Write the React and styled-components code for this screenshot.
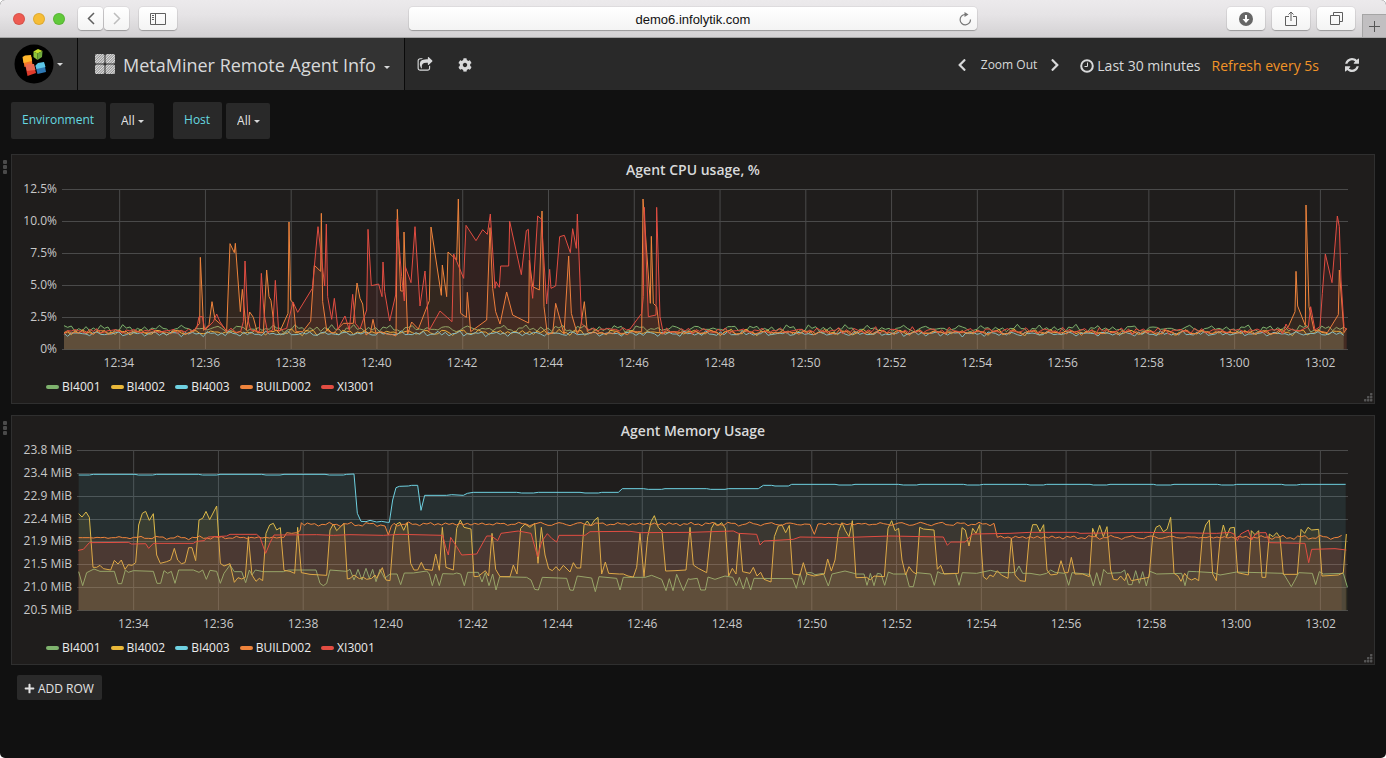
import React from "react";
import styled, { createGlobalStyle } from "styled-components";
import { FaCog, FaChevronLeft, FaChevronRight, FaPlus } from "react-icons/fa";

const GlobalStyle = createGlobalStyle`
  * { box-sizing: border-box; }
  body { margin: 0; background: #fff; font-family: "Open Sans", "Noto Sans", sans-serif; }
  button, input, select { font-family: inherit; margin: 0; }
`;

/* ---------- window and browser toolbar ---------- */

const Window = styled.div`
  min-height: 100vh;
  display: flex;
  flex-direction: column;
  overflow: hidden;
  border-radius: 5px;
  background: #111;
  color: #d8d9da;
`;

const Toolbar = styled.header`
  display: grid;
  grid-template-columns: 1fr 41% 1fr;
  align-items: center;
  height: 38px;
  background: linear-gradient(#eceaec, #e6e4e6 40%, #d3d1d3);
  border-bottom: 1px solid #a5a5a5;
`;

const ToolbarSide = styled.div`
  display: flex;
  align-items: center;
  height: 100%;
  padding-left: 13px;
  justify-content: ${(p) => (p.$end ? "flex-end" : "flex-start")};
  gap: ${(p) => p.$gap}px;
`;

const Lights = styled.div`
  display: flex;
  gap: 8px;
  margin-right: 12px;
`;

const Light = styled.span`
  width: 12px;
  height: 12px;
  border-radius: 50%;
  background: ${(p) => p.$color};
  box-shadow: inset 0 0 0 1px rgba(0, 0, 0, 0.1);
`;

const ToolButton = styled.button`
  display: flex;
  align-items: center;
  justify-content: center;
  width: ${(p) => (p.$narrow ? 25 : 38)}px;
  height: 23px;
  margin-left: ${(p) => (p.$apart ? 9 : 0)}px;
  padding: 0;
  border: 0;
  border-radius: 4px;
  background: linear-gradient(#fff, #f4f4f4);
  box-shadow: 0 0 0 1px rgba(0, 0, 0, 0.05), 0 1px 1px rgba(0, 0, 0, 0.25);
  color: ${(p) => (p.$faded ? "#bdbdbd" : "#5f5f5f")};
`;

const Address = styled.label`
  display: flex;
  align-items: center;
  height: 23px;
  border-radius: 4px;
  background: linear-gradient(#fff, #f4f4f4);
  box-shadow: 0 0 0 1px rgba(0, 0, 0, 0.05), 0 1px 1px rgba(0, 0, 0, 0.25);
`;

const AddressInput = styled.input`
  flex: 1;
  min-width: 0;
  padding: 2px 0 0 24px;
  border: 0;
  background: none;
  text-align: center;
  font: 13px "Liberation Sans", Arial, sans-serif;
  color: #111;
`;

const ReloadButton = styled.button`
  width: 24px;
  padding: 0;
  border: 0;
  background: none;
  line-height: 0;
`;

const NewTab = styled.button`
  align-self: flex-end;
  display: flex;
  align-items: center;
  justify-content: center;
  width: 24px;
  height: 23px;
  padding: 0;
  border: 1px solid #a5a5a5;
  border-width: 1px 0 0 1px;
  background: #c1bfc1;
`;

/* ---------- dashboard navigation ---------- */

const Nav = styled.nav`
  display: flex;
  align-items: center;
  height: 52px;
  background: #292929;
`;

const NavBlock = styled.button`
  display: flex;
  align-items: center;
  height: 100%;
  gap: ${(p) => p.$gap}px;
  padding: 0 ${(p) => p.$right}px 0 ${(p) => p.$left}px;
  border: 0;
  border-right: 1px solid #0a0a0a;
  background: #333;
  color: #d8d9da;
  white-space: nowrap;
`;

const DashboardName = styled.span`
  padding-top: 2px;
  font-size: 18px;
  line-height: 24px;
`;

const Caret = styled.span`
  border: solid transparent;
  border-width: 3px 3px 0;
  border-top-color: #d8d9da;
  margin-top: ${(p) => (p.$low ? 6 : 0)}px;
`;

const NavAction = styled.button`
  display: flex;
  align-items: center;
  justify-content: center;
  width: 40px;
  height: 40px;
  padding: 2px 0 0;
  border: 0;
  background: none;
  color: #d8d9da;
`;

const NavTime = styled.div`
  display: flex;
  align-items: center;
  margin-left: auto;
  padding-right: 14px;
`;

const TimeButton = styled.button`
  display: flex;
  align-items: center;
  gap: 3px;
  padding: ${(p) => (p.$small ? 2 : 4)}px 0 0;
  margin-right: ${(p) => p.$after || 0}px;
  border: 0;
  background: none;
  white-space: nowrap;
  line-height: 20px;
  font-size: ${(p) => (p.$small ? 12 : 14)}px;
  color: ${(p) => (p.$accent ? "#f29427" : "#d8d9da")};
`;

/* ---------- filters ---------- */

const Filters = styled.div`
  display: flex;
  gap: 19px;
  padding: 12px 11px 15px;
`;

const Filter = styled.div`
  display: flex;
  align-items: flex-end;
  gap: 4px;
  font-size: 12px;
`;

const FilterLabel = styled.label`
  padding: 0 12px 0 11px;
  line-height: 36px;
  height: 37px;
  border-radius: 2px;
  background: #292929;
  color: #66d9e0;
`;

const SelectBox = styled.div`
  display: flex;
  align-items: center;
  position: relative;
`;

const Select = styled.select`
  appearance: none;
  width: 44px;
  height: 36px;
  padding: 0 0 2px 11px;
  border: 0;
  border-radius: 2px;
  background: #292929;
  color: #e3e3e3;
  font-size: 12px;
`;

const SelectCaret = styled(Caret)`
  position: absolute;
  right: 10px;
  pointer-events: none;
`;

/* ---------- panels ---------- */

const Rows = styled.main`
  display: flex;
  flex-direction: column;
  gap: 11px;
  padding-right: 11px;
`;

const Row = styled.div`
  display: grid;
  grid-template-columns: 11px 1fr;
`;

const RowHandle = styled.button`
  display: flex;
  flex-direction: column;
  align-items: center;
  gap: 1px;
  padding: 6px 1px 0 0;
  border: 0;
  background: none;
  span {
    width: 4px;
    height: 4px;
    border-radius: 1px;
    background: #4a4a4a;
  }
`;

const Panel = styled.section`
  position: relative;
  min-width: 0;
  padding-bottom: 6px;
  border: 1px solid #2f2f2f;
  background: #1f1d1c;
`;

const PanelTitle = styled.h2`
  margin: 0;
  padding-top: 4px;
  text-align: center;
  font-size: 14px;
  font-weight: 600;
  line-height: 22px;
  color: #d8d9da;
`;

const PlotRow = styled.div`
  display: grid;
  grid-template-columns: ${(p) => p.$axis}px 1fr;
  gap: 5px;
  height: 176px;
  padding-right: 26px;
`;

const YAxis = styled.div`
  display: flex;
  flex-direction: column;
  justify-content: space-between;
  text-align: right;
  font-size: 12px;
  line-height: 16px;
  color: #c8c8c8;
  white-space: nowrap;
`;

const XAxis = styled.div`
  display: flex;
  margin: 0 11px 0 ${(p) => p.$left}px;
  font-size: 12px;
  line-height: 12px;
  color: #c8c8c8;
  span {
    flex: 1;
    text-align: center;
  }
`;

const PlotSvg = styled.svg`
  display: block;
  width: 100%;
  height: 176px;
  path {
    vector-effect: non-scaling-stroke;
  }
`;

const Legend = styled.ul`
  display: flex;
  gap: 10px;
  margin: 8px 0 0;
  padding: 0 0 0 34px;
  list-style: none;
  font-size: 12px;
  line-height: 20px;
`;

const LegendItem = styled.li`
  display: flex;
  align-items: center;
  gap: 3px;
  color: #ececec;
  &::before {
    content: "";
    width: 13px;
    height: 4px;
    border-radius: 2px;
    background: ${(p) => p.$color};
  }
`;

const ResizeGrip = styled.svg`
  position: absolute;
  right: 1px;
  bottom: 1px;
`;

const AddRow = styled.button`
  align-self: flex-start;
  display: flex;
  align-items: center;
  gap: 3px;
  height: 25px;
  margin: 10px 0 0 17px;
  padding: 1px 8px 0 7px;
  border: 0;
  border-radius: 2px;
  background: #2a2a2a;
  color: #e3e3e3;
  font-size: 12px;
`;

/* ---------- series data: x and y are in thirds of a pixel ---------- */

const COLORS = {
  BI4001: "#7eb26d",
  BI4002: "#eab839",
  BI4003: "#6ed0e0",
  BUILD002: "#ef843c",
  XI3001: "#e24d42",
};

const at = (dx, dy, text) =>
  text.trim().split(/\s+/).map((pair) => {
    const [x, y] = pair.split(",").map(Number);
    return [x + dx, y + dy];
  });

const idle = (from, to, level, swing, seed) => {
  const points = [];
  for (let x = from; x < to; x += 11) {
    const n = Math.sin(x * 0.11 + seed) * 0.5 + Math.sin(x * 0.043 * seed + 2) * 0.4 + Math.sin(x * 0.29 + seed * 3) * 0.5;
    points.push([x, Math.round(level + n * swing)]);
  }
  return points;
};

const cpu = {
  BI4001: idle(192, 4042, 986, 10, 1.7),
  BI4002: idle(192, 4042, 997, 8, 2.9),
  BI4003: idle(192, 4042, 1001, 7, 4.3),
  BUILD002: [
    ...idle(192, 578, 996, 7, 3.1),
    ...at(0, 450, `580,545 590,530 599,520 601,322 607,450 611,541 627,524 636,455 645,508 668,528 680,543 690,281 703,308
      706,280 721,485 727,418 739,541 749,486 760,502 772,548 790,548 800,360 807,440 813,452 824,540 840,543 864,490 867,216
      872,450 880,460 888,545 908,545 932,514 943,346 962,364 964,190 968,455 980,540 1000,550 1030,520 1060,520`),
    ...at(1020, 540, `51,309 60,355 68,372 78,465 92,455 99,418 108,460 124,455 140,462 155,463 168,468 172,88 182,333
      190,333 192,156 203,462 215,426 235,447 268,362 273,141 304,346 307,255 320,350 324,216 350,240 355,57 362,400 379,412
      382,337 392,455 440,420 450,143 458,325 467,395 480,432 500,336 518,405 566,429 568,241 578,320 598,330 606,93 612,380
      622,462 638,460 647,370 672,462 686,228 694,400 712,462 722,440 733,365 742,455`),
    ...idle(1772, 1900, 999, 5, 3.1),
    ...at(1020, 540, `892,455 905,455 909,57 931,370 934,169 940,370 950,380 960,460`),
    ...idle(1990, 3860, 997, 7, 3.1),
    ...at(3120, 540, `745,440 765,395 768,274 773,378 796,437 798,75 807,380 822,450 862,458 895,404 898,270 912,458 920,445`),
  ],
  XI3001: [
    ...idle(192, 572, 993, 8, 5.2),
    ...at(0, 450, `575,543 590,535 597,500 607,500 615,540 640,515 650,492 660,515 680,545 693,535 708,547 722,545 730,515
      735,333 744,510 752,540 778,545 784,370 792,490 803,548 818,540 826,391 836,542 860,535 879,456 893,487 937,415 954,230
      974,408 979,222 983,440 995,508 1003,445 1014,538`),
    ...at(1020, 540, `0,435 15,408 28,450 38,343 46,430 60,447 80,390 84,148 94,317 116,312 126,350 129,246 134,335 149,423
      167,345 171,118 185,290 193,363 196,260 213,308 225,140 240,378 255,273 267,452 300,393 336,425 341,222 371,295 378,136
      408,182 428,149 442,163 451,102 465,325 468,305 478,322 482,258 506,258 509,124 544,284 559,152 565,148 573,310 578,355
      593,108 604,117 620,372 629,268 633,325 647,318 659,170 673,166 691,218 698,146 709,205 712,102 725,430 740,445`),
    ...idle(1770, 1885, 988, 5, 5.2),
    ...at(1020, 540, `870,447 905,400 910,350 913,82 925,410 948,405 950,82 960,410 970,460`),
    ...idle(2000, 3850, 992, 9, 5.2),
    ...at(3120, 540, `738,432 745,445 760,450 780,452 805,440 812,380 825,450 840,440 847,340 856,222 876,308 892,108
      898,140 903,300 912,440 920,450`),
  ],
};

const memory = {
  BI4001: [
    ...at(0, 1230, `236,485 248,527 260,488 282,477 300,484 343,484 354,521 365,521 376,480 385,487 400,482 460,484 471,520
      482,520 492,482 503,490 514,484 525,520 536,480 580,480 597,487 608,480 619,508 630,481 650,484 661,520 672,490 690,465
      703,485 725,485 737,518 748,480 756,495 766,480 790,485 850,485 865,480 948,480 960,520 970,527 980,520 990,480
      1040,484`),
    ...at(1050, 1320, `0,388 12,420 24,388 36,420 48,385 58,415 68,388 78,425 90,388 104,415 120,402 141,402 152,434
      163,399 190,399 230,393 238,402 247,437 257,402 268,437 278,401 310,402 320,399 332,402 343,437 353,397 385,397 396,426
      406,398 417,437 428,402 438,450 449,410 530,412 543,420 554,448 565,450 577,412 650,415 660,450 670,451 682,408 725,414
      736,455 747,410 800,415 810,450 820,412 885,412 905,406 935,418 948,452 958,416 969,452 980,403 1000,452 1015,416`),
    ...at(2070, 1320, `0,418 22,415 32,450 46,450 54,411 75,418 105,408 128,412 139,437 148,412 160,447 170,412 182,450
      192,415 308,416 319,445 330,400 341,435 352,398 365,398 375,404 400,400 415,438 426,402 465,393 500,402 522,402 531,436
      541,400 552,437 562,400 573,402 584,436 595,396 610,402 648,402 658,440 670,440 680,398 722,402 733,436 743,395 755,401
      797,400 807,436 817,398 860,400 902,391 930,398 965,398 977,396 987,378 998,400`),
    ...at(3090, 1320, `0,400 30,405 50,400 62,390 75,397 105,400 116,436 126,398 180,403 190,438 200,398 211,436 221,388
      232,400 272,398 284,390 295,434 306,434 317,392 328,430 338,395 349,438 360,394 380,402 455,400 465,437 475,394 500,395
      550,398 570,405 620,396 760,400 784,440 795,420 806,398 847,400 857,434 868,395 880,402 940,400 952,441`),
  ],
  BI4002: [
    ...at(0, 1230, `236,311 246,321 258,306 268,322 279,472 290,472 300,466 310,476 332,480 343,451 354,462 364,450 375,478
      385,464 396,466 407,458 416,345 427,310 437,304 448,331 460,311 470,435 481,460 500,455 512,450 523,415 533,450 544,461
      555,458 566,413 576,413 587,452 597,330 608,325 618,304 629,329 650,288 661,460 672,468 690,461 703,517 714,503 725,507
      736,502 745,380 756,495 768,514 778,505 788,512 798,370 809,345 820,340 830,360 841,353 852,481 870,484 884,490 893,352
      904,488 915,490 930,493 980,496 990,360 1000,342 1010,362 1032,340 1042,507`),
    ...at(1050, 1320, `0,415 12,405 28,416 40,412 50,418 65,415 75,405 80,415 97,383 108,420 120,422 130,290 140,252
      150,247 161,271 172,247 182,370 192,390 203,390 214,367 224,388 247,391 257,342 268,391 277,262 288,382 310,390 320,265
      331,240 342,262 363,267 372,410 385,409 406,392 416,408 426,280 437,388 450,410 480,410 490,375 501,402 512,265 525,252
      540,262 554,250 564,370 574,262 585,345 596,386 607,392 618,380 628,392 640,376 660,396 670,368 680,384 692,384 702,255
      712,243 722,258 734,240 744,232 755,402 766,366 776,400 808,402 820,402 834,408 850,411 860,382 870,280 882,410 893,290
      903,245 913,227 925,262 936,273 947,393 975,392 1008,390`),
    ...at(2070, 1320, `0,262 10,375 25,385 50,398 64,265 74,248 84,256 95,248 106,265 116,408 127,385 138,402 148,280
      158,395 180,400 190,382 201,408 212,397 222,418 243,426 253,290 265,258 276,255 287,278 298,256 308,402 330,405 340,368
      350,402 372,408 403,402 413,357 424,393 435,360 445,275 456,248 466,272 477,290 487,242 498,413 530,412 541,420 552,408
      583,410 594,265 605,242 615,272 626,265 636,360 647,405 657,380 668,395 679,402 689,262 700,267 732,270 742,388 752,376
      762,402 805,400 816,263 826,270 837,318 848,265 858,280 869,254 880,410 890,418 900,405 910,410 922,392 934,405 954,415
      964,295 975,405 990,422 1006,424 1017,300`),
    ...at(3090, 1320, `8,254 20,254 30,275 41,254 51,390 62,405 82,402 93,362 104,398 114,398 124,352 135,402 158,402
      178,410 188,265 198,290 209,256 220,290 231,260 242,390 250,418 262,420 272,408 284,422 293,400 304,422 325,418 357,412
      368,290 378,262 389,256 400,275 411,268 422,232 432,400 444,408 453,424 464,400 475,415 485,420 495,415 506,422 517,290
      527,255 538,240 548,402 559,422 570,300 580,255 590,290 600,264 613,262 623,398 655,405 664,272 675,284 686,272 696,412
      707,412 718,282 729,290 740,278 750,292 760,403 802,403 813,268 824,280 834,262 845,270 866,268 876,408 925,405 940,398
      949,282`),
  ],
  BI4003: [
    ...at(0, 1230, `236,195 268,195 280,193 405,193 415,195 458,195 470,193 595,193 608,195 650,195 660,193 785,193 798,195
      840,195 852,193 975,193 988,195 1030,195 1040,193`),
    ...at(1050, 1320, `12,102 22,220 33,244 48,245 60,241 80,246 95,244 112,247 118,247 128,180 138,143 148,139 175,138
      185,136 203,136 213,211 224,166 290,166 305,164 340,166 352,160 370,157 500,157 515,159 550,159 565,157 690,157 705,159
      745,159 755,157 805,157 817,146 880,146 895,148 935,148 945,146`),
    ...at(2070, 1320, `50,146 62,148 105,148 115,146 205,146 220,136 245,136 255,138 295,138 305,133 435,133 447,135
      485,135 495,133 625,133 640,135 680,135 690,133 820,133 832,135 868,135 880,133`),
    ...at(3090, 1320, `-10,133 0,135 40,135 50,133 180,133 190,135 230,135 240,133 370,133 380,135 422,135 432,133 562,133
      575,135 610,135 620,133 755,133 765,135 800,135 812,133 947,133`),
  ],
  BUILD002: [
    ...idle(236, 850, 1613, 4, 2.3),
    ...at(0, 1230, `852,382 860,368 875,370 890,368 900,362 904,338 912,346`),
    ...idle(922, 1150, 1573, 5, 2.3),
    ...at(1050, 1320, `105,258 115,285 124,258`),
    ...idle(1182, 2425, 1572, 5, 2.3),
    ...at(2070, 1320, `360,253 373,283 384,252`),
    ...idle(2464, 2975, 1572, 5, 2.3),
    ...at(2070, 1320, `912,250 922,292`),
    ...idle(3002, 4036, 1612, 5, 2.3),
  ],
  XI3001: [
    ...at(0, 1230, `234,421 250,418 268,398 385,397 395,402 437,401 446,415 460,400 580,400 590,394 612,392 625,381 680,378
      690,373 770,373 780,382 797,430 810,398 822,375 950,374 1000,376`),
    ...at(1050, 1320, `0,284 100,286 150,283 278,286 288,325 295,345 302,292 320,320 335,345 380,342 410,288 425,288
      443,302 453,280 505,273 543,280 563,350 575,305 592,281 605,295 620,306 627,286 705,286 720,275 840,274 870,278`),
    ...at(2070, 1320, `0,277 130,273 145,280 200,283 210,315 222,303 310,298 330,291 450,293 600,288 760,291 772,316
      782,306 825,306 848,282 960,280`),
    ...at(3090, 1320, `0,277 140,277 150,280 340,277 560,280 600,277 612,282 622,302 632,282 655,270 665,300 675,284
      690,278 708,278 718,308 825,310 836,368 845,328 915,326 949,330`),
  ],
};

const TIMES = Array.from({ length: 15 }, (_, i) => {
  const minutes = 34 + i * 2;
  return `${12 + Math.floor(minutes / 60)}:${String(minutes % 60).padStart(2, "0")}`;
});

const CHARTS = [
  {
    title: "Agent CPU usage, %",
    series: cpu,
    yLabels: ["12.5%", "10.0%", "7.5%", "5.0%", "2.5%", "0%"],
    axis: 45,
    xLeft: 64,
    box: [186, 543, 3858, 528],
    firstX: 359,
    stepX: 257.3,
  },
  {
    title: "Agent Memory Usage",
    series: memory,
    yLabels: ["23.8 MiB", "23.4 MiB", "22.9 MiB", "22.4 MiB", "21.9 MiB", "21.5 MiB", "21.0 MiB", "20.5 MiB"],
    axis: 60,
    xLeft: 79,
    box: [231, 1326, 3813, 528],
    firstX: 401,
    stepX: 254.3,
  },
];

/* ---------- drawings ---------- */

function Logo() {
  return (
    <svg width="40" height="40" viewBox="0 0 40 40" aria-hidden="true">
      <circle cx="20" cy="20" r="19.5" fill="#000" />
      <path d="M19.500 7.500L23.500 9.500L23.500 16L19.500 13z" fill="#8fc43a" />
      <path d="M19.500 7.500L24 5L28.500 7L23.500 9.500z" fill="#c3de2b" />
      <path d="M23.500 9.500L28.500 7L28 13L23.500 16z" fill="#6fa83c" />
      <path d="M9 14L17.500 13L18.500 21L10.500 23z" fill="#f5772a" />
      <path d="M8.500 13L11 11.500L17 11L18 17L9.500 19z" fill="#ffb62c" />
      <path d="M11.500 22L19.500 20L22 29L13.500 32z" fill="#de3a2b" />
      <path d="M11.500 22L13 20L20 20L21.500 26L13 27z" fill="#ea6a52" />
      <path d="M21.500 22L30.500 20L32 28L23.500 30z" fill="#2e78b3" />
      <path d="M21.500 21.500L24 19L30 18L31.500 23L22.500 25z" fill="#5cc6e6" />
    </svg>
  );
}

function DashboardIcon() {
  return (
    <svg width="20" height="20" viewBox="0 0 20 20" aria-hidden="true">
      <defs>
        <pattern id="hatch" width="1.8" height="1.8" patternUnits="userSpaceOnUse" patternTransform="rotate(45)">
          <rect width="1.8" height="1.8" fill="#858585" />
          <rect width="1" height="1.8" fill="#e2e2e2" />
        </pattern>
      </defs>
      {[[0, 0], [10.5, 0], [0, 10.5], [10.5, 10.5]].map(([x, y]) => (
        <rect key={`${x}-${y}`} x={x} y={y} width="9.5" height="9.5" rx="1.5" fill="url(#hatch)" />
      ))}
    </svg>
  );
}

function Chart({ chart }) {
  const [left, top, width, height] = chart.box;
  const right = left + width;
  const plotTop = top + 25;
  const base = plotTop + 480;
  const gaps = chart.yLabels.length - 1;
  const rows = chart.yLabels.map((_, i) => top + 25.5 + Math.round((160 * i) / gaps) * 3);
  return (
    <PlotSvg viewBox={chart.box.join(" ")} preserveAspectRatio="none" role="img" aria-label={chart.title}>
      <g stroke="#4a4a4a" fill="none">
        {rows.map((y) => <path key={y} d={`M${left} ${y}H${right}`} />)}
        {TIMES.map((t, i) => <path key={t} d={`M${chart.firstX + i * chart.stepX} ${plotTop}V${base}`} />)}
      </g>
      {Object.entries(chart.series).map(([name, points]) => {
        const line = points.map(([x, y]) => `${x} ${y}`).join("L");
        return (
          <g key={name}>
            <path d={`M${points[0][0]} ${base}L${line}V${base}Z`} fill={COLORS[name]} fillOpacity="0.1" />
            <path d={`M${line}`} fill="none" stroke={COLORS[name]} strokeLinejoin="round" />
          </g>
        );
      })}
    </PlotSvg>
  );
}

function ChartPanel({ chart }) {
  return (
    <Row>
      <RowHandle aria-label="Row menu"><span /><span /><span /></RowHandle>
      <Panel>
        <PanelTitle>{chart.title}</PanelTitle>
        <PlotRow $axis={chart.axis}>
          <YAxis>{chart.yLabels.map((l) => <span key={l}>{l}</span>)}</YAxis>
          <Chart chart={chart} />
        </PlotRow>
        <XAxis $left={chart.xLeft}>{TIMES.map((t) => <span key={t}>{t}</span>)}</XAxis>
        <Legend>
          {Object.keys(COLORS).map((n) => <LegendItem key={n} $color={COLORS[n]}>{n}</LegendItem>)}
        </Legend>
        <ResizeGrip width="9" height="9" viewBox="0 0 9 9" fill="#555" aria-hidden="true">
          {[[6, 0], [3, 3], [6, 3], [0, 6], [3, 6], [6, 6]].map(([x, y]) => (
            <rect key={`${x}-${y}`} x={x} y={y} width="2.4" height="2.4" rx="0.6" />
          ))}
        </ResizeGrip>
      </Panel>
    </Row>
  );
}

const thin = { fill: "none", stroke: "currentColor" };

function BrowserToolbar() {
  return (
    <Toolbar>
      <ToolbarSide $gap={1}>
        <Lights>
          <Light $color="#ee5b52" /><Light $color="#f6bd36" /><Light $color="#61c93a" />
        </Lights>
        <ToolButton $narrow aria-label="Back">
          <svg width="8" height="13" viewBox="0 0 8 13" {...thin} strokeWidth="1.5"><path d="M7 1L1.500 6.500L7 12" /></svg>
        </ToolButton>
        <ToolButton $narrow $faded aria-label="Forward">
          <svg width="8" height="13" viewBox="0 0 8 13" {...thin} strokeWidth="1.5"><path d="M1 1L6.500 6.500L1 12" /></svg>
        </ToolButton>
        <ToolButton $apart aria-label="Show sidebar">
          <svg width="16" height="12" viewBox="0 0 16 12" {...thin}>
            <path d="M.5.5h15v11H.5zM5.500.5v11M2 2.500h2M2 4.500h2M2 6.500h2" />
          </svg>
        </ToolButton>
      </ToolbarSide>
      <Address>
        <AddressInput aria-label="Address" defaultValue="demo6.infolytik.com" />
        <ReloadButton aria-label="Reload">
          <svg width="13" height="14" viewBox="0 0 13 14" fill="none" stroke="#777" strokeWidth="1.2">
            <path d="M6 2.500A5.200 5.200 0 1 0 11.500 7.500" /><path d="M5.500 0L9.500 2.500L5.500 5Z" fill="#777" stroke="none" />
          </svg>
        </ReloadButton>
      </Address>
      <ToolbarSide $end $gap={7}>
        <ToolButton aria-label="Downloads">
          <svg width="14" height="14" viewBox="0 0 14 14">
            <circle cx="7" cy="7" r="7" fill="#666" />
            <path d="M6 3h2v4h2.500L7 11L3.500 7H6z" fill="#fff" />
          </svg>
        </ToolButton>
        <ToolButton aria-label="Share">
          <svg width="12" height="16" viewBox="0 0 12 16" {...thin}>
            <path d="M4 5.500H.5v9h11v-9H8M6 10V1M3.500 3.500L6 1L8.500 3.500" />
          </svg>
        </ToolButton>
        <ToolButton aria-label="Show tabs">
          <svg width="13" height="13" viewBox="0 0 13 13" {...thin}>
            <path d="M.5 3.500h9v9h-9zM3.500 3.500v-3h9v9h-3" />
          </svg>
        </ToolButton>
        <NewTab aria-label="New tab">
          <svg width="11" height="11" viewBox="0 0 11 11" stroke="#555"><path d="M5.500 0v11M0 5.500h11" /></svg>
        </NewTab>
      </ToolbarSide>
    </Toolbar>
  );
}

function DashboardNav() {
  return (
    <Nav>
      <NavBlock $left={14} $right={14} $gap={3} aria-label="Main menu"><Logo /><Caret /></NavBlock>
      <NavBlock $left={17} $right={14} $gap={8}>
        <DashboardIcon />
        <DashboardName>MetaMiner Remote Agent Info</DashboardName>
        <Caret $low />
      </NavBlock>
      <NavAction aria-label="Share dashboard">
        <svg width="16" height="16" viewBox="0 0 1792 1792" fill="currentColor">
          <path d="M1472 989v259q0 119-84.500 203.500t-203.500 84.500h-832q-119 0-203.500-84.500t-84.500-203.500v-832q0-119 84.500-203.500t203.500-84.500h255q13 0 22.500 9.500t9.500 22.500q0 27-26 32-77 26-133 60-10 4-16 4h-112q-66 0-113 47t-47 113v832q0 66 47 113t113 47h832q66 0 113-47t47-113v-214q0-19 18-29 28-13 54-37 16-16 35-8 21 9 21 29zm237-496l-384 384q-18 19-45 19-12 0-25-5-39-17-39-59v-192h-160q-323 0-438 131-119 137-74 473 3 23-20 34-8 2-12 2-16 0-26-13-10-14-21-31t-39.500-68.500-49.500-99.500-38.500-114-17.500-122q0-49 3.500-91t14-90 28-88 47-81.500 68.500-74 94.500-61.500 124.500-48.500 159.500-30.500 196.500-11h160v-192q0-42 39-59 13-5 25-5 26 0 45 19l384 384q19 19 19 45t-19 45z" />
        </svg>
      </NavAction>
      <NavAction aria-label="Settings"><FaCog size={14} /></NavAction>
      <NavTime>
        <TimeButton aria-label="Earlier" $small $after={12}><FaChevronLeft size={14} /></TimeButton>
        <TimeButton $small $after={11}>Zoom Out</TimeButton>
        <TimeButton aria-label="Later" $small $after={18}><FaChevronRight size={14} /></TimeButton>
        <TimeButton $after={11}>
          <svg width="14" height="14" viewBox="0 0 14 14" {...thin}>
            <circle cx="7" cy="7" r="5.800" strokeWidth="2" /><path d="M7.500 3.500V7.500H4.500" />
          </svg>
          Last 30 minutes
        </TimeButton>
        <TimeButton $accent $after={13}>Refresh every 5s</TimeButton>
        <NavAction aria-label="Refresh">
          <svg width="14" height="14" viewBox="0 0 1536 1536" fill="currentColor">
            <path d="M1511 928q0 5-1 7-64 268-268 434.500t-478 166.500q-146 0-282.500-55t-243.500-157l-129 129q-19 19-45 19t-45-19-19-45v-448q0-26 19-45t45-19h448q26 0 45 19t19 45-19 45l-137 137q71 66 161 102t187 36q134 0 250-65t186-179q11-17 53-117 8-23 30-23h192q13 0 22.500 9.500t9.500 22.500zm25-800v448q0 26-19 45t-45 19h-448q-26 0-45-19t-19-45 19-45l138-138q-148-137-349-137-134 0-250 65t-186 179q-11 17-53 117-8 23-30 23h-199q-13 0-22.500-9.500t-9.500-22.500v-7q65-268 270-434.500t480-166.500q146 0 284 55.500t245 156.500l130-129q19-19 45-19t45 19 19 45z" />
          </svg>
        </NavAction>
      </NavTime>
    </Nav>
  );
}

export default function App() {
  return (
    <Window>
      <GlobalStyle />
      <BrowserToolbar />
      <DashboardNav />
      <Filters>
        {["Environment", "Host"].map((name) => (
          <Filter key={name}>
            <FilterLabel htmlFor={name}>{name}</FilterLabel>
            <SelectBox>
              <Select id={name}><option>All</option></Select>
              <SelectCaret />
            </SelectBox>
          </Filter>
        ))}
      </Filters>
      <Rows>
        {CHARTS.map((chart) => <ChartPanel key={chart.title} chart={chart} />)}
      </Rows>
      <AddRow><FaPlus size={11} />ADD ROW</AddRow>
    </Window>
  );
}
